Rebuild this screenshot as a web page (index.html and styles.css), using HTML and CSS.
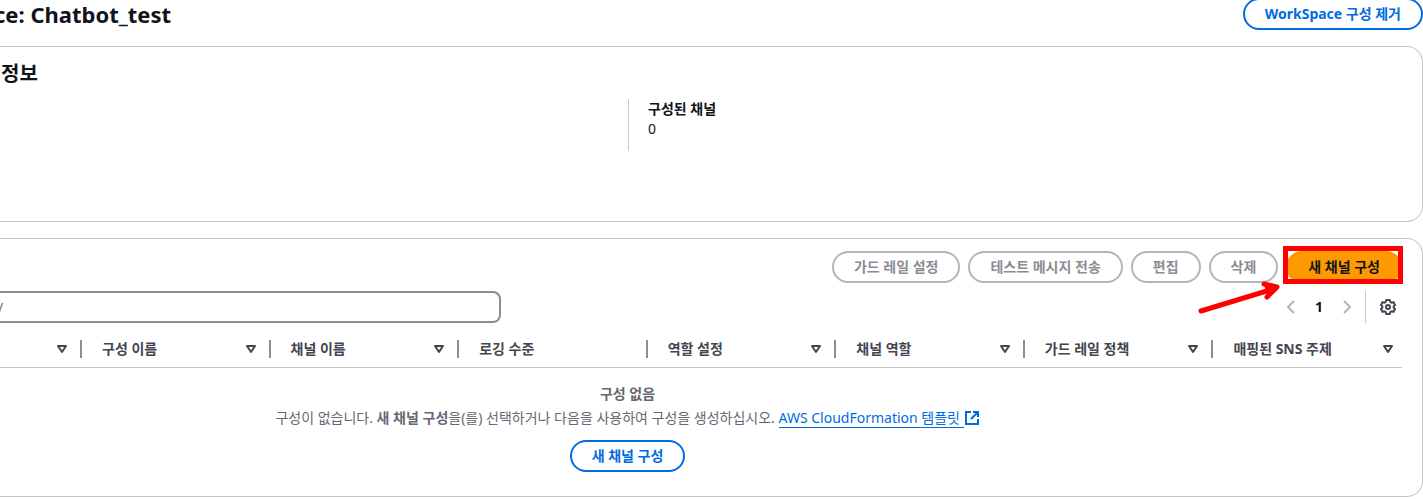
FILE: index.html
```html
<!DOCTYPE html>
<html lang="ko">
<head>
    <meta charset="UTF-8">
    <meta name="viewport" content="width=device-width, initial-scale=1.0">
    <title>Chatbot_test</title>
    <link rel="stylesheet" href="styles.css">
</head>
<body>
    <header class="page-header">
        <h1>ce: Chatbot_test</h1>
        <button class="btn" type="button">WorkSpace 구성 제거</button>
    </header>

    <main>
        <section class="panel details">
            <h2>정보</h2>
            <dl class="detail-item">
                <dt>구성된 채널</dt>
                <dd>0</dd>
            </dl>
        </section>

        <section class="panel channels">
            <div class="actions">
                <button class="btn" type="button" disabled>가드 레일 설정</button>
                <button class="btn" type="button" disabled>테스트 메시지 전송</button>
                <button class="btn" type="button" disabled>편집</button>
                <button class="btn" type="button" disabled>삭제</button>
                <div class="marked">
                    <button class="btn btn-primary" type="button">새 채널 구성</button>
                    <svg class="arrow" width="86" height="40" viewBox="0 0 86 40">
                        <path d="M4 31L76 9" />
                        <path class="arrow-head" d="M67 4L80 7L70 17" />
                    </svg>
                </div>
            </div>

            <div class="tools">
                <input class="search" type="text" placeholder="/" aria-label="검색">
                <nav class="pagination">
                    <button class="icon-btn" type="button" aria-label="이전 페이지" disabled>
                        <svg width="16" height="16" viewBox="0 0 16 16"><path d="M11 2L5 8l6 6" /></svg>
                    </button>
                    <button class="page-number" type="button">1</button>
                    <button class="icon-btn" type="button" aria-label="다음 페이지" disabled>
                        <svg width="16" height="16" viewBox="0 0 16 16"><path d="M5 2l6 6-6 6" /></svg>
                    </button>
                </nav>
                <div class="settings">
                    <button class="icon-btn" type="button" aria-label="기본 설정">
                        <svg width="16" height="16" viewBox="0 0 16 16">
                            <path d="M6.2 1h3.6l.5 2 1.2.7 2-.6L15 6l-1.300 1.300v1.400L15 10l-1.500 2.900-2-.6-1.200.7-.5 2H6.200l-.5-2-1.200-.7-2 .6L1 10l1.300-1.300V7.300L1 6l1.500-2.900 2 .6L5.700 3z" />
                            <circle cx="8" cy="8" r="2" />
                        </svg>
                    </button>
                </div>
            </div>

            <table>
                <thead>
                    <tr>
                        <th class="first"><div><span></span><svg class="sort" width="12" height="10" viewBox="0 0 12 10"><path d="M2 2h8L6 8z" /></svg></div></th>
                        <th><div><span>구성 이름</span><svg class="sort" width="12" height="10" viewBox="0 0 12 10"><path d="M2 2h8L6 8z" /></svg></div></th>
                        <th><div><span>채널 이름</span><svg class="sort" width="12" height="10" viewBox="0 0 12 10"><path d="M2 2h8L6 8z" /></svg></div></th>
                        <th><div><span>로깅 수준</span></div></th>
                        <th><div><span>역할 설정</span><svg class="sort" width="12" height="10" viewBox="0 0 12 10"><path d="M2 2h8L6 8z" /></svg></div></th>
                        <th><div><span>채널 역할</span><svg class="sort" width="12" height="10" viewBox="0 0 12 10"><path d="M2 2h8L6 8z" /></svg></div></th>
                        <th><div><span>가드 레일 정책</span><svg class="sort" width="12" height="10" viewBox="0 0 12 10"><path d="M2 2h8L6 8z" /></svg></div></th>
                        <th><div><span>매핑된 SNS 주제</span><svg class="sort" width="12" height="10" viewBox="0 0 12 10"><path d="M2 2h8L6 8z" /></svg></div></th>
                    </tr>
                </thead>
                <tbody>
                    <tr>
                        <td class="empty" colspan="8">
                            <b>구성 없음</b>
                            <p>구성이 없습니다. <b>새 채널 구성</b>을(를) 선택하거나 다음을 사용하여 구성을 생성하십시오.
                                <a href="#"><span>AWS CloudFormation 템플릿 </span><svg width="16" height="16" viewBox="0 0 16 16"><path d="M7 2H2v12h12V9M9 2h5v5M14 2L7 9" /></svg></a></p>
                            <button class="btn" type="button">새 채널 구성</button>
                        </td>
                    </tr>
                </tbody>
            </table>
        </section>
    </main>
</body>
</html>
```

FILE: styles.css
```css
* {
    box-sizing: border-box;
}
body {
    margin: 0;
    background: #fff;
    color: #0f141a;
    font-family: "Noto Sans", "Noto Sans CJK KR", sans-serif;
    font-size: 14px;
    line-height: 20px;
}
h1, h2, p, dl, dd {
    margin: 0;
}
.page-header {
    display: flex;
    justify-content: space-between;
    height: 46px;
}
.page-header h1 {
    margin-left: -6px;
    font-size: 22px;
    line-height: 28px;
}
.page-header .btn {
    margin-top: -2px;
}
.btn {
    height: 32px;
    padding: 0 20px;
    border: 2px solid #006ce0;
    border-radius: 20px;
    background: #fff;
    color: #006ce0;
    font: inherit;
    font-weight: 700;
    white-space: nowrap;
}
.btn:disabled {
    border-color: #b4b4bb;
    color: #8c8c94;
}
.btn-primary {
    border-color: #ff9900;
    background: #ff9900;
    color: #0f141a;
}
.panel {
    border: 1px solid #c6c6cd;
    border-left: 0;
    border-radius: 0 16px 16px 0;
    padding-right: 20px;
}
.details {
    height: 176px;
    padding-top: 15px;
    margin-bottom: 16px;
}
.details h2 {
    padding-left: 1px;
    font-size: 20px;
    line-height: 24px;
}
.detail-item {
    height: 52px;
    margin: 13px 0 0 44.8%;
    padding-left: 19px;
    border-left: 1px solid #c6c6cd;
}
.detail-item dt {
    font-weight: 700;
}
.channels {
    padding-top: 12px;
    padding-bottom: 24px;
}
.actions {
    display: flex;
    justify-content: flex-end;
    gap: 8px;
}
.marked {
    position: relative;
}
/* red frame over the primary button */
.marked::after {
    content: "";
    position: absolute;
    inset: -5px -1px -1px -3px;
    border: 5px solid #fe0000;
}
.arrow {
    position: absolute;
    top: 29px;
    right: 119px;
    z-index: 1;
    fill: none;
    stroke: #fe0000;
    stroke-width: 5;
    stroke-linecap: round;
    stroke-linejoin: round;
}
.arrow-head {
    fill: #fe0000;
}
.tools {
    display: flex;
    align-items: center;
    margin-top: 8px;
}
.search {
    width: 35.7%;
    height: 32px;
    padding: 0;
    border: 2px solid #8c8c94;
    border-left: 0;
    border-radius: 0 8px 8px 0;
    font: inherit;
    text-indent: -2px;
}
.search::placeholder {
    color: #656871;
}
.pagination {
    display: flex;
    align-items: center;
    gap: 8px;
    margin-left: auto;
}
.icon-btn, .page-number {
    display: flex;
    justify-content: center;
    padding: 0;
    border: 0;
    background: none;
    color: #424650;
    font: inherit;
}
.page-number {
    width: 24px;
    color: #0f141a;
    font-weight: 700;
}
.icon-btn:disabled {
    color: #b4b4bb;
}
.icon-btn svg, .empty a svg {
    fill: none;
    stroke: currentColor;
    stroke-width: 2;
}
.settings svg {
    stroke-linejoin: round;
}
.settings {
    display: flex;
    align-items: center;
    height: 32px;
    margin-left: 10px;
    padding: 0 6px 0 14px;
    border-left: 1px solid #c6c6cd;
}
table {
    width: 100%;
    border-collapse: separate;
    border-spacing: 0;
    table-layout: fixed;
}
th {
    height: 45px;
    padding: 7px 0 0;
    border-bottom: 1px solid #c6c6cd;
    color: #424650;
    text-align: left;
}
th div {
    display: flex;
    align-items: center;
    justify-content: space-between;
    height: 18px;
    padding: 0 12px 0 20px;
    border-right: 2px solid #8c8c94;
}
th:last-child div {
    padding-right: 8px;
    border-right: 0;
}
.first {
    width: 82px;
}
.sort {
    fill: none;
    stroke: #424650;
    stroke-width: 2;
    stroke-linejoin: round;
}
.empty {
    padding: 16px 147px 0 0;
    color: #656871;
    text-align: center;
}
.empty p {
    margin: 4px 0 12px;
}
.empty a {
    color: #006ce0;
    text-decoration: none;
}
.empty a span {
    border-bottom: 1px solid #006ce0;
    white-space: pre;
}
.empty a svg {
    vertical-align: -3px;
}
```
